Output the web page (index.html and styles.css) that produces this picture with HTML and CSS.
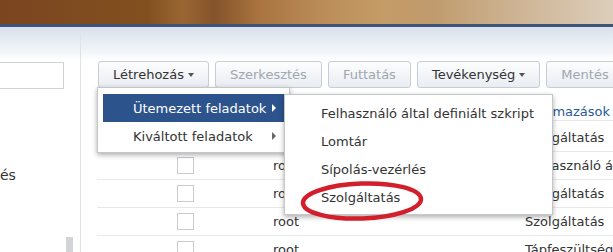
FILE: index.html
```html
<!DOCTYPE html>
<html lang="hu">
<head>
    <meta charset="UTF-8">
    <meta name="viewport" content="width=device-width, initial-scale=1.0">
    <title>Feladatütemező</title>
    <link rel="stylesheet" href="styles.css">
</head>
<body>
    <div class="banner"></div>

    <div class="main">
        <aside class="sidebar">
            <input class="search" type="text">
            <div class="tree-item">és</div>
            <div class="scroll-thumb"></div>
        </aside>

        <section class="content">
            <div class="toolbar">
                <button class="btn">Létrehozás <span class="caret"></span></button>
                <button class="btn" disabled>Szerkesztés</button>
                <button class="btn" disabled>Futtatás</button>
                <button class="btn">Tevékenység <span class="caret"></span></button>
                <button class="btn" disabled>Mentés</button>
            </div>

            <div class="grid">
                <div class="row head">
                    <div class="cell"></div>
                    <div class="cell"></div>
                    <div class="cell">Alkalmazások</div>
                </div>
                <div class="rows">
                    <div class="row">
                        <div class="cell"><span class="check"></span></div>
                        <div class="cell">root</div>
                        <div class="cell">Szolgáltatás</div>
                    </div>
                    <div class="row">
                        <div class="cell"><span class="check"></span></div>
                        <div class="cell">root</div>
                        <div class="cell">Felhasználó által definiált szkript</div>
                    </div>
                    <div class="row">
                        <div class="cell"><span class="check"></span></div>
                        <div class="cell">root</div>
                        <div class="cell">Szolgáltatás</div>
                    </div>
                    <div class="row">
                        <div class="cell"><span class="check"></span></div>
                        <div class="cell">root</div>
                        <div class="cell">Szolgáltatás</div>
                    </div>
                    <div class="row">
                        <div class="cell"><span class="check"></span></div>
                        <div class="cell">root</div>
                        <div class="cell">Tápfeszültség</div>
                    </div>
                </div>
            </div>
        </section>
    </div>

    <!-- open dropdown of "Létrehozás" -->
    <div class="menu menu-main">
        <div class="menu-item active">Ütemezett feladatok <span class="arrow"></span></div>
        <div class="menu-item">Kiváltott feladatok <span class="arrow"></span></div>
    </div>
    <div class="menu menu-sub">
        <div class="menu-item">Felhasználó által definiált szkript</div>
        <div class="menu-item">Lomtár</div>
        <div class="menu-item">Sípolás-vezérlés</div>
        <div class="menu-item">Szolgáltatás</div>
    </div>

    <svg class="mark" width="134" height="48" viewBox="0 0 134 48">
        <ellipse cx="66" cy="23" rx="59" ry="17.5" transform="rotate(-2 66 23)"></ellipse>
    </svg>
</body>
</html>
```

FILE: styles.css
```css
body {
    margin: 0;
    width: 613px;
    height: 252px;
    overflow: hidden;
    font-family: "DejaVu Sans", Verdana, sans-serif;
    font-size: 13px;
    color: #333;
    background-color: #fff;
}
.banner {
    height: 24px;
    border-bottom: 3px solid #3f5279;
    background: linear-gradient(90deg, #7b4520 0%, #82501f 24%, #9a6634 30%, #84532a 35%, #a8733f 42%, #b98b57 52%, #c59c66 62%, #bf9a6c 70%, #cdb393 84%, #dccebb 100%);
}
.main {
    display: flex;
    height: 225px;
    overflow: hidden;
    background: linear-gradient(#d9e1ec, #f4f7fa 26px, #fff 34px);
}
.sidebar {
    position: relative;
    flex: 0 0 80px;
    border-right: 1px solid #e0e3e6;
    padding-top: 35px;
}
.search {
    display: block;
    width: 66px;
    height: 27px;
    margin-left: -2px;
    box-sizing: border-box;
    border: 1px solid #cfd3d8;
    background: #fff;
}
.tree-item {
    margin-top: 76px;
    line-height: 20px;
    font-size: 14px;
}
.scroll-thumb {
    position: absolute;
    left: 66px;
    top: 210px;
    width: 7px;
    height: 20px;
    background-color: #d2d4d7;
}
.content {
    flex: 1;
    min-width: 0;
    padding: 34px 0 0 16px;
}
.toolbar {
    display: flex;
    gap: 6px;
    padding-left: 1px;
}
.btn {
    display: flex;
    align-items: center;
    height: 27px;
    padding: 0 14px;
    flex-shrink: 0;
    border: 1px solid #c5cdd7;
    border-radius: 3px;
    background: linear-gradient(#fdfdfe, #e9edf2);
    font-family: inherit;
    font-size: 13px;
    color: #333;
}
.btn:disabled {
    color: #a0a7b0;
}
.caret {
    margin-left: 4px;
    width: 0;
    height: 0;
    border-left: 3.5px solid transparent;
    border-right: 3.5px solid transparent;
    border-top: 4px solid #555;
}
.grid {
    margin-top: 8px;
}
.row {
    display: grid;
    grid-template-columns: 176px 252px 1fr;
    height: 28px;
    box-sizing: border-box;
    border-bottom: 1px solid #e6e8ea;
    align-items: center;
    white-space: nowrap;
}
.row.head {
    height: 25px;
    align-items: end;
    color: #2b5797;
    line-height: 16px;
    text-indent: -4px;
}
.rows {
    padding-top: 3px;
}
.cell:first-child {
    display: flex;
    justify-content: center;
}
.check {
    width: 17px;
    height: 17px;
    box-sizing: border-box;
    border: 1px solid #c9cbce;
    background: #fff;
}
.menu {
    position: absolute;
    box-sizing: border-box;
    background: #fff;
    border: 1px solid #c3c7cc;
    box-shadow: 0 2px 5px rgba(0, 0, 0, 0.32);
    color: #333;
}
.menu-main {
    left: 97px;
    top: 87px;
    width: 193px;
    padding: 6px 5px 2px;
}
.menu-sub {
    left: 284px;
    top: 94px;
    width: 269px;
    height: 121px;
    padding: 4px 0 3px;
}
.menu-item {
    display: flex;
    align-items: center;
    justify-content: space-between;
    height: 28px;
    white-space: nowrap;
}
.menu-main .menu-item {
    padding: 0 8px 0 30px;
}
.menu-sub .menu-item {
    padding-left: 36px;
}
.menu-item.active {
    background-color: #2d538c;
    color: #fff;
}
.arrow {
    width: 0;
    height: 0;
    border-top: 4px solid transparent;
    border-bottom: 4px solid transparent;
    border-left: 4px solid #666;
}
.active .arrow {
    border-left-color: #fff;
}
.mark {
    position: absolute;
    left: 296px;
    top: 178px;
}
.mark ellipse {
    fill: none;
    stroke: #d21f2b;
    stroke-width: 4.5;
}
```
